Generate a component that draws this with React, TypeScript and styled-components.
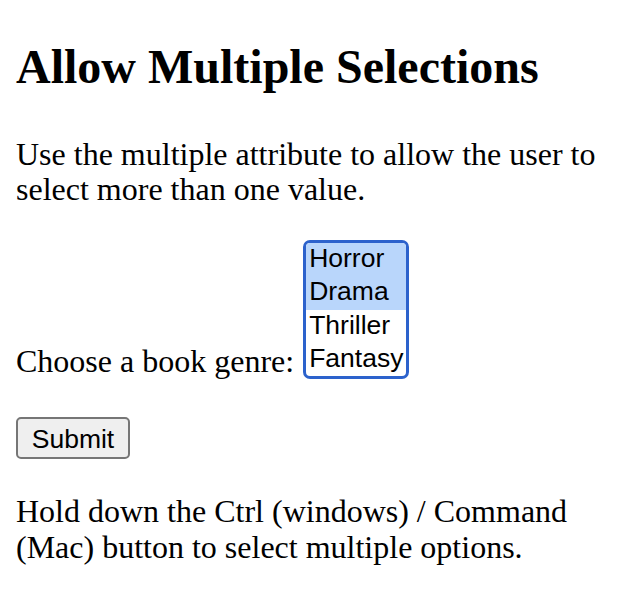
import React from "react";
import styled, { createGlobalStyle } from "styled-components";

const GlobalStyle = createGlobalStyle`
  html, body {
    margin: 0;
    padding: 0;
    background: #ffffff;
  }
  body {
    font-family: "Liberation Serif", "Times New Roman", serif;
    color: #000000;
  }
`;

const Page = styled.main`
  padding: 0 16px;
  display: flow-root;
`;

const Title = styled.h1`
  font-size: 48px;
  font-weight: 700;
  line-height: 53px;
  margin: 40px 0 0;
`;

const Text = styled.p<{ $top: number; $lh: number }>`
  font-size: 32px;
  line-height: ${(p) => p.$lh}px;
  margin: ${(p) => p.$top}px 0 0;
`;

const Form = styled.form`
  display: flex;
  flex-direction: column;
  align-items: flex-start;
  margin-top: 33px;
`;

const FieldRow = styled.div`
  display: flex;
  align-items: flex-end;
  gap: 9px;
`;

const Label = styled.label`
  font-size: 32px;
  line-height: 35px;
`;

const ListBox = styled.div`
  box-sizing: border-box;
  width: 106px;
  height: 139px;
  border: 3px solid #2c62cc;
  border-radius: 7px;
  overflow: hidden;
  display: flex;
  flex-direction: column;
  background: #ffffff;
`;

const Option = styled.div<{ $selected?: boolean }>`
  box-sizing: border-box;
  height: 33.25px;
  line-height: 30px;
  padding: 0 3px;
  font-family: "Liberation Sans", Arial, sans-serif;
  font-size: 26.5px;
  color: #000000;
  background: ${(p) => (p.$selected ? "#b9d6fb" : "transparent")};
  white-space: nowrap;
`;

const SubmitButton = styled.button`
  box-sizing: border-box;
  margin-top: 38px;
  height: 42px;
  width: 114px;
  padding: 2px 12px 0;
  border: 2px solid #767676;
  border-radius: 5px;
  background: #efefef;
  font-family: "Liberation Sans", Arial, sans-serif;
  font-size: 26.5px;
  color: #000000;
  line-height: 1;
  display: flex;
  align-items: center;
  justify-content: center;
`;

const genres = [
  { name: "Horror", selected: true },
  { name: "Drama", selected: true },
  { name: "Thriller", selected: false },
  { name: "Fantasy", selected: false },
];

export default function App() {
  return (
    <>
      <GlobalStyle />
      <Page>
        <Title>Allow Multiple Selections</Title>
        <Text $top={44} $lh={35}>
          Use the multiple attribute to allow the user to select more than one value.
        </Text>
        <Form onSubmit={(e) => e.preventDefault()}>
          <FieldRow>
            <Label>Choose a book genre:</Label>
            <ListBox role="listbox" aria-multiselectable="true">
              {genres.map((g) => (
                <Option key={g.name} role="option" aria-selected={g.selected} $selected={g.selected}>
                  {g.name}
                </Option>
              ))}
            </ListBox>
          </FieldRow>
          <SubmitButton type="submit">Submit</SubmitButton>
        </Form>
        <Text $top={34} $lh={36}>
          Hold down the Ctrl (windows) / Command (Mac) button to select multiple options.
        </Text>
      </Page>
    </>
  );
}
